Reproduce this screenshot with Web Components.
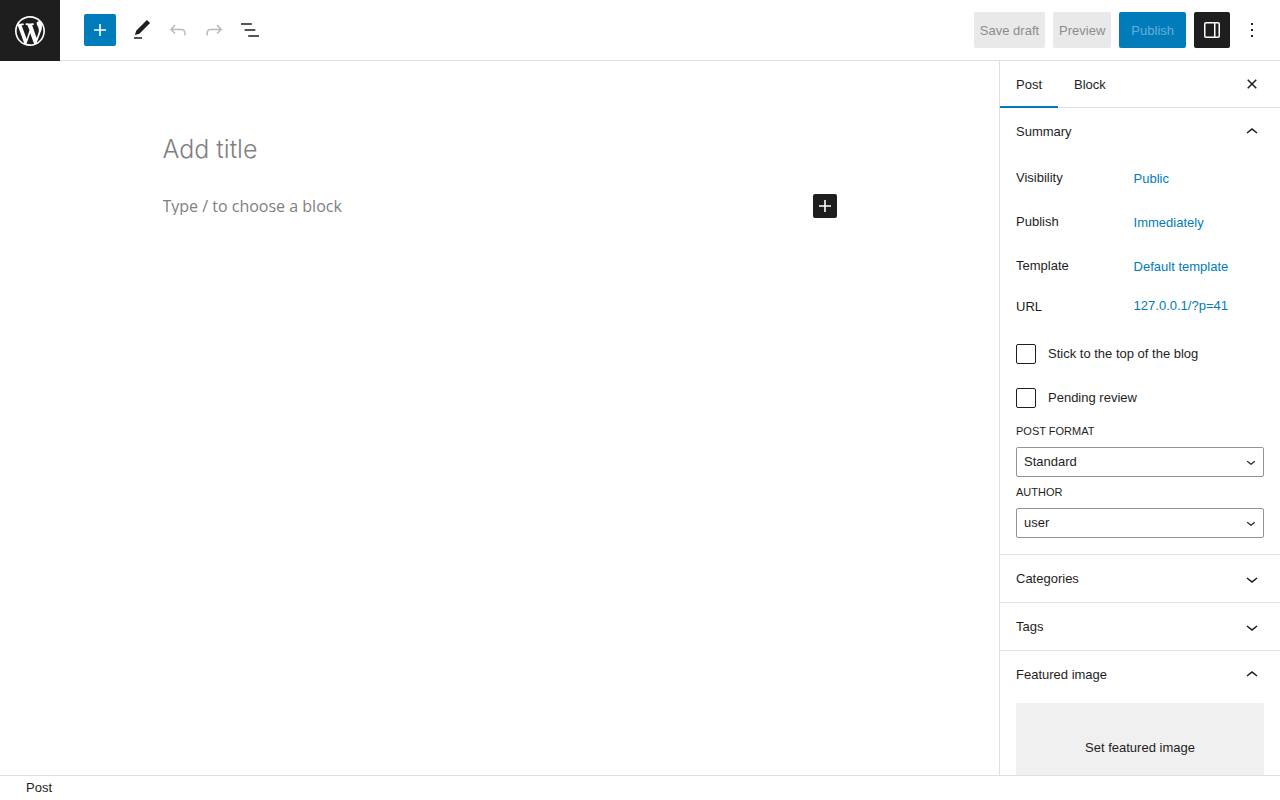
<!DOCTYPE html>
<html lang="en">
<head>
<meta charset="utf-8">
<meta name="viewport" content="width=device-width, initial-scale=1">
<title>Add New Post</title>
<style>
  html, body { height: 100%; margin: 0; }
  body {
    --accent: #007cba;
    --ink: #1e1e1e;
    --line: #e0e0e0;
    background: #fff;
    color: var(--ink);
    font: 13px/18px "Liberation Sans", Arial, sans-serif;
  }
</style>
</head>
<body>
<post-editor></post-editor>

<script>
const ICONS = {
  wordpress: ['-2 -2 24 24', 'M20 10c0-5.51-4.49-10-10-10C4.48 0 0 4.49 0 10c0 5.52 4.48 10 10 10 5.51 0 10-4.48 10-10zM7.78 15.37L4.37 6.22c.55-.02 1.17-.08 1.17-.08.5-.06.44-1.13-.06-1.11 0 0-1.45.11-2.37.11-.18 0-.37 0-.58-.01C4.12 2.69 6.87 1.11 10 1.11c2.33 0 4.45.87 6.05 2.34-.68-.11-1.65.39-1.65 1.58 0 .74.45 1.36.9 2.1.35.61.55 1.36.55 2.46 0 1.49-1.4 5-1.4 5l-3.03-8.37c.54-.02.82-.17.82-.17.5-.05.44-1.25-.06-1.22 0 0-1.44.12-2.38.12-.87 0-2.33-.12-2.33-.12-.5-.03-.56 1.2-.06 1.22l.92.08 1.26 3.41zM17.41 10c.24-.64.74-1.87.43-4.25.7 1.29 1.05 2.71 1.05 4.25 0 3.29-1.73 6.24-4.4 7.78.97-2.59 1.94-5.2 2.92-7.78zM6.1 18.09C3.12 16.65 1.11 13.53 1.11 10c0-1.3.23-2.48.72-3.59C3.25 10.3 4.67 14.2 6.1 18.09zm4.03-6.63l2.58 6.98c-.86.29-1.76.45-2.71.45-.79 0-1.57-.11-2.29-.33.81-2.38 1.62-4.74 2.42-7.1z'],
  plus: ['0 0 24 24', 'M18 11.2h-5.2V6h-1.6v5.2H6v1.6h5.2V18h1.6v-5.2H18z'],
  edit: ['0 0 24 24', 'M20.1 5.1L16.9 2 6.2 12.7l-1.3 4.4 4.5-1.3L20.1 5.1zM4 20.8h8v-1.5H4v1.5z'],
  undo: ['0 0 24 24', 'M18.3 11.7c-.6-.6-1.4-.9-2.3-.9H6.7l2.9-3.3-1.1-1-4.5 5L8.5 16l1-1-2.7-2.7H16c.5 0 .9.2 1.3.5 1 1 1 3.4 1 4.5v.3h1.5v-.2c0-1.5 0-4.3-1.5-5.7z'],
  redo: ['0 0 24 24', 'M15.6 6.5l-1.1 1 2.9 3.3H8c-.9 0-1.7.3-2.3.9-1.4 1.5-1.4 4.2-1.4 5.6v.2h1.5v-.3c0-1.1 0-3.5 1-4.5.3-.3.7-.5 1.3-.5h9.2L14.5 15l1.1 1.1 4.6-4.6-4.6-5z'],
  list: ['0 0 24 24', 'M13.8 5.2H3v1.5h10.8V5.2zm-3.6 12v1.5H21v-1.5H10.2zm7.2-6H6.6v1.5h10.8v-1.5z'],
  drawer: ['0 0 24 24', 'M18 4H6c-1.1 0-2 .9-2 2v12c0 1.1.9 2 2 2h12c1.1 0 2-.9 2-2V6c0-1.1-.9-2-2-2zm-4 14.5H6c-.3 0-.5-.2-.5-.5V6c0-.3.2-.5.5-.5h8v13zm4.5-.5c0 .3-.2.5-.5.5h-2.5v-13H18c.3 0 .5.2.5.5v12z'],
  more: ['0 0 24 24', 'M13 19h-2v-2h2v2zm0-6h-2v-2h2v2zm0-6h-2V5h2v2z'],
  close: ['0 0 24 24', 'M12 13.06l3.712 3.713 1.061-1.06L13.061 12l3.712-3.712-1.06-1.06L12 10.938 8.288 7.227l-1.061 1.06L10.939 12l-3.712 3.712 1.06 1.061L12 13.061z'],
  up: ['0 0 24 24', 'M6.5 12.4L12 8l5.5 4.4-.9 1.2L12 10l-4.5 3.6-1-1.2z'],
  down: ['0 0 24 24', 'M17.5 11.6L12 16l-5.5-4.4.9-1.2L12 14l4.5-3.6 1 1.2z']
};

function define(name, html, setup) {
  const template = document.createElement('template');
  template.innerHTML = html;
  customElements.define(name, class extends HTMLElement {
    constructor() {
      super();
      this.attachShadow({ mode: 'open' }).append(template.content.cloneNode(true));
    }
    connectedCallback() {
      if (setup) setup(this, this.shadowRoot);
    }
  });
}

define('ui-icon', `
  <style>
    :host { display: block; flex: none; width: 24px; height: 24px; }
    svg { display: block; width: 100%; height: 100%; fill: currentColor; }
  </style>
  <svg aria-hidden="true"><path></path></svg>`,
  (host, root) => {
    const [box, d] = ICONS[host.getAttribute('name')];
    root.querySelector('svg').setAttribute('viewBox', box);
    root.querySelector('path').setAttribute('d', d);
  });

define('icon-button', `
  <style>
    :host { display: block; flex: none; width: 36px; height: 36px; }
    :host([size="medium"]) { width: 32px; height: 32px; }
    :host([size="small"]) { width: 24px; height: 24px; }
    button {
      display: flex; align-items: center; justify-content: center;
      width: 100%; height: 100%; padding: 0; border: 0; border-radius: 2px;
      background: none; color: inherit; cursor: pointer;
    }
    :host([tone="accent"]) button { background: var(--accent); color: #fff; }
    :host([tone="dark"]) button { background: var(--ink); color: #fff; }
    button:disabled { opacity: .3; cursor: default; }
  </style>
  <button type="button"><slot></slot></button>`,
  (host, root) => {
    const button = root.querySelector('button');
    button.setAttribute('aria-label', host.getAttribute('label'));
    button.disabled = host.hasAttribute('disabled');
  });

define('text-button', `
  <style>
    :host { display: block; flex: none; }
    button {
      height: 36px; padding: 2px 6px 0; border: 0; border-radius: 2px;
      background: #e9e9e9; color: #8c8c8c; font: inherit; white-space: nowrap;
    }
    :host([primary]) button { padding: 2px 12px 0; background: var(--accent); color: #66b0d6; }
  </style>
  <button type="button" disabled><slot></slot></button>`);

define('editor-header', `
  <style>
    :host {
      display: flex; justify-content: space-between; box-sizing: border-box;
      height: 61px; border-bottom: 1px solid var(--line);
    }
    .home {
      display: flex; align-items: center; justify-content: center;
      width: 60px; height: 61px; background: var(--ink); color: #fff;
    }
    .home ui-icon { width: 36px; height: 36px; }
    .start, .tools, .end { display: flex; align-items: center; }
    .start { align-items: flex-start; gap: 24px; }
    .tools { height: 60px; }
    .tools icon-button:first-child { margin-right: 8px; }
    .end { gap: 8px; padding-right: 10px; }
    .pair { display: flex; gap: 4px; }
  </style>
  <div class="start">
    <a class="home" href="#posts" aria-label="View posts"><ui-icon name="wordpress"></ui-icon></a>
    <div class="tools">
      <icon-button size="medium" tone="accent" label="Toggle block inserter"><ui-icon name="plus"></ui-icon></icon-button>
      <icon-button label="Tools"><ui-icon name="edit"></ui-icon></icon-button>
      <icon-button label="Undo" disabled><ui-icon name="undo"></ui-icon></icon-button>
      <icon-button label="Redo" disabled><ui-icon name="redo"></ui-icon></icon-button>
      <icon-button label="List view"><ui-icon name="list"></ui-icon></icon-button>
    </div>
  </div>
  <div class="end">
    <text-button>Save draft</text-button>
    <text-button>Preview</text-button>
    <text-button primary>Publish</text-button>
    <div class="pair">
      <icon-button tone="dark" label="Settings"><ui-icon name="drawer"></ui-icon></icon-button>
      <icon-button label="Options"><ui-icon name="more"></ui-icon></icon-button>
    </div>
  </div>`);

define('editor-canvas', `
  <style>
    :host { display: block; padding: 70px 16px 0; overflow: auto; }
    .content { max-width: 674px; margin: 0 auto; }
    input {
      display: block; width: 100%; min-width: 0; margin: 0; padding: 0; border: 0; outline: 0;
      background: none; color: #333; font: inherit;
    }
    input::placeholder { color: #808080; opacity: 1; }
    .title { height: 36px; font-family: Inter, sans-serif; font-size: 25px; font-weight: 300; }
    .block {
      display: flex; align-items: center; height: 24px; margin-top: 27px;
      font-family: "Open Sans", sans-serif; font-size: 16px;
    }
  </style>
  <div class="content">
    <input class="title" type="text" aria-label="Add title" placeholder="Add title">
    <div class="block">
      <input type="text" aria-label="Block" placeholder="Type / to choose a block">
      <icon-button size="small" tone="dark" label="Add block"><ui-icon name="plus"></ui-icon></icon-button>
    </div>
  </div>`);

define('settings-tabs', `
  <style>
    :host {
      display: flex; align-items: center; box-sizing: border-box;
      height: 47px; padding: 0 10px 1px 0; box-shadow: inset 0 -1px var(--line);
    }
    button {
      align-self: flex-start; height: 47px; padding: 0 16px; border: 0; background: none;
      color: inherit; font: inherit; cursor: pointer;
    }
    [aria-selected="true"] { box-shadow: inset 0 -2px var(--accent); }
    icon-button { margin-left: auto; }
  </style>
  <button type="button" role="tab" aria-selected="true">Post</button>
  <button type="button" role="tab" aria-selected="false">Block</button>
  <icon-button label="Close settings"><ui-icon name="close"></ui-icon></icon-button>`);

define('settings-panel', `
  <style>
    :host { display: block; border-bottom: 1px solid var(--line); }
    h2 { margin: 0; font: inherit; }
    button {
      display: flex; align-items: center; justify-content: space-between;
      width: 100%; height: 47px; padding: 0 16px; border: 0; background: none;
      color: inherit; font: inherit; text-align: left; cursor: pointer;
    }
    .body { padding: 5px 16px 16px; }
    :host([open]) .show { display: none; }
    :host(:not([open])) .hide, :host(:not([open])) .body { display: none; }
  </style>
  <h2><button type="button">
    <span></span>
    <ui-icon class="hide" name="up"></ui-icon>
    <ui-icon class="show" name="down"></ui-icon>
  </button></h2>
  <div class="body"><slot></slot></div>`,
  (host, root) => {
    root.querySelector('span').textContent = host.getAttribute('heading');
    root.querySelector('button').setAttribute('aria-expanded', host.hasAttribute('open'));
  });

define('summary-row', `
  <style>
    :host { display: grid; grid-template-columns: 45% 1fr; align-items: center; height: 36px; }
    :host([compact]) { height: 28px; }
    ::slotted(*) {
      justify-self: start; padding: 0 6px; border: 0; background: none; cursor: pointer;
      color: var(--accent); font: inherit; text-decoration: none;
    }
    ::slotted(button) { padding-top: 2px; }
    :host([compact]) span { padding-top: 2px; }
  </style>
  <span></span><slot></slot>`,
  (host, root) => { root.querySelector('span').textContent = host.getAttribute('label'); });

define('check-field', `
  <style>
    :host { display: block; }
    label { display: flex; align-items: center; gap: 12px; height: 20px; }
    input {
      appearance: none; flex: none; width: 20px; height: 20px; margin: 0;
      border: 1px solid var(--ink); border-radius: 2px; background: #fff;
    }
    input:checked { background: var(--accent); }
  </style>
  <label><input type="checkbox"><span><slot></slot></span></label>`);

define('select-field', `
  <style>
    :host { display: block; }
    label { display: block; height: 16px; margin-bottom: 8px; font-size: 11px; line-height: 16px; text-transform: uppercase; }
    .box { display: grid; align-items: center; }
    select, ui-icon { grid-area: 1 / 1; }
    select {
      appearance: none; width: 100%; height: 30px; margin: 0; padding: 0 26px 0 7px;
      border: 1px solid #949494; border-radius: 2px; background: #fff;
      color: inherit; font: inherit;
    }
    ui-icon { justify-self: end; width: 18px; height: 18px; margin-right: 4px; pointer-events: none; }
  </style>
  <label for="choice"></label>
  <div class="box">
    <select id="choice"><option></option></select>
    <ui-icon name="down"></ui-icon>
  </div>`,
  (host, root) => {
    root.querySelector('label').textContent = host.getAttribute('label');
    root.querySelector('option').textContent = host.getAttribute('value');
  });

define('settings-sidebar', `
  <style>
    :host { display: block; border-left: 1px solid var(--line); overflow: hidden; }
    .rows { display: grid; gap: 8px; }
    .checks { display: grid; gap: 24px; margin: 24px 0 15px; }
    .selects { display: grid; gap: 7px; }
    .image {
      display: block; width: 100%; height: 90px; padding: 0; border: 0; border-radius: 2px;
      background: #f0f0f0; color: inherit; font: inherit; cursor: pointer;
    }
  </style>
  <settings-tabs role="tablist"></settings-tabs>
  <settings-panel heading="Summary" open>
    <div class="rows">
      <summary-row label="Visibility"><button type="button">Public</button></summary-row>
      <summary-row label="Publish"><button type="button">Immediately</button></summary-row>
      <summary-row label="Template"><button type="button">Default template</button></summary-row>
      <summary-row label="URL" compact><a href="#permalink">127.0.0.1/?p=41</a></summary-row>
    </div>
    <div class="checks">
      <check-field>Stick to the top of the blog</check-field>
      <check-field>Pending review</check-field>
    </div>
    <div class="selects">
      <select-field label="Post Format" value="Standard"></select-field>
      <select-field label="Author" value="user"></select-field>
    </div>
  </settings-panel>
  <settings-panel heading="Categories"></settings-panel>
  <settings-panel heading="Tags"></settings-panel>
  <settings-panel heading="Featured image" open>
    <button class="image" type="button">Set featured image</button>
  </settings-panel>`);

define('post-editor', `
  <style>
    :host {
      display: grid; height: 100vh;
      grid-template: auto minmax(0, 1fr) auto / minmax(0, 1fr) 281px;
    }
    editor-header, footer { grid-column: 1 / -1; }
    footer { display: flex; align-items: center; height: 24px; padding: 0 26px; border-top: 1px solid var(--line); }
  </style>
  <editor-header></editor-header>
  <editor-canvas></editor-canvas>
  <settings-sidebar></settings-sidebar>
  <footer>Post</footer>`);
</script>
</body>
</html>
